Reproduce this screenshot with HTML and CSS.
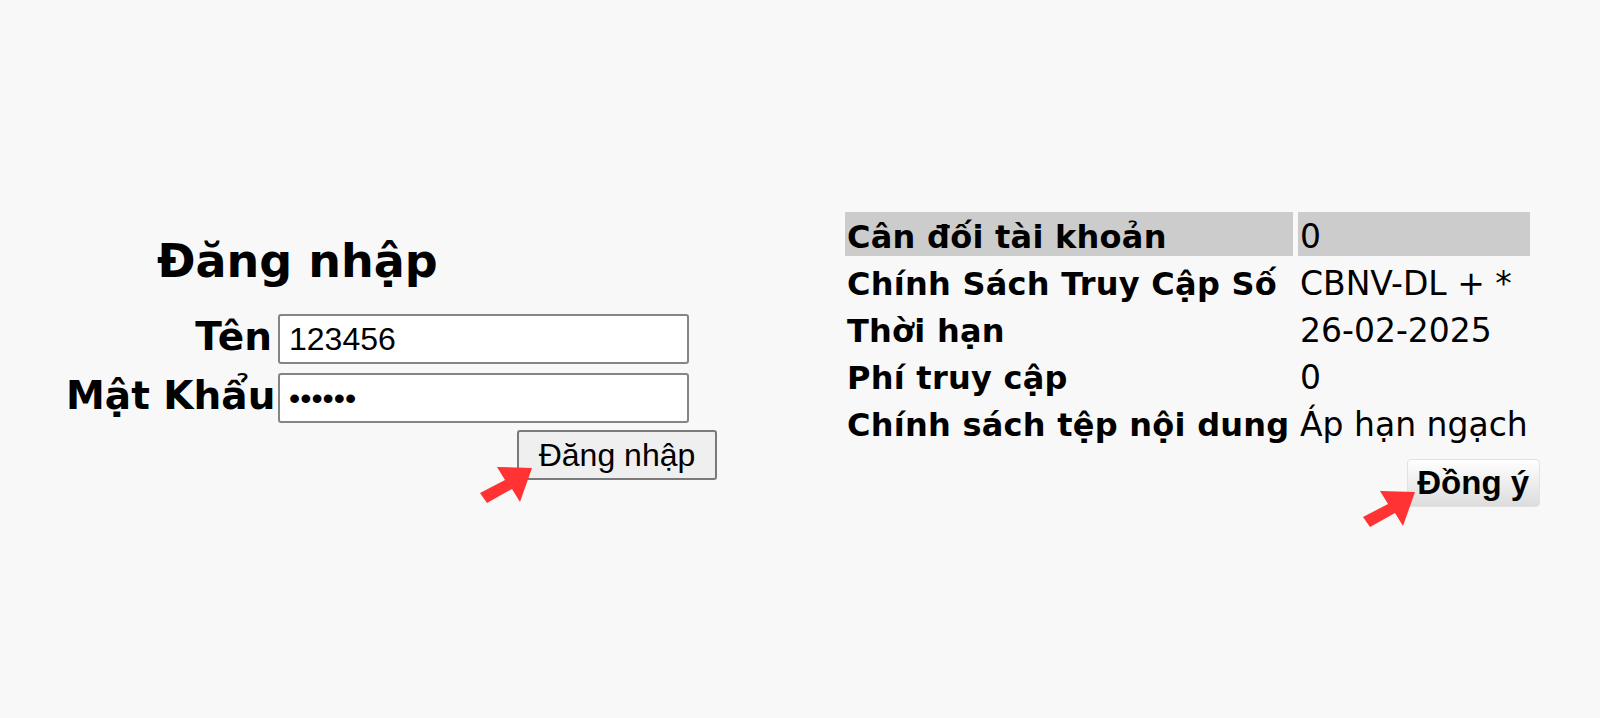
FILE: index.html
```html
<!DOCTYPE html>
<html lang="vi">
<head>
    <meta charset="UTF-8">
    <meta name="viewport" content="width=device-width, initial-scale=1.0">
    <link rel="stylesheet" href="styles.css">
    <title>Đăng nhập</title>
</head>
<body>
    <div class="page">
        <form class="login" action="" method="POST">
            <h2 class="login-title">Đăng nhập</h2>
            <div class="login-grid">
                <label for="user" class="field-label">Tên</label>
                <input type="text" id="user" class="field-input" value="123456">

                <label for="pass" class="field-label">Mật Khẩu</label>
                <input type="password" id="pass" class="field-input" value="123456">

                <div class="login-actions">
                    <button type="button" class="btn-login">Đăng nhập</button>
                </div>
            </div>
        </form>

        <div class="summary">
            <table class="info-table">
                <tr class="row-head">
                    <td class="info-label">Cân đối tài khoản</td>
                    <td class="info-value">0</td>
                </tr>
                <tr>
                    <td class="info-label">Chính Sách Truy Cập Số</td>
                    <td class="info-value">CBNV-DL + *</td>
                </tr>
                <tr>
                    <td class="info-label">Thời hạn</td>
                    <td class="info-value">26-02-2025</td>
                </tr>
                <tr>
                    <td class="info-label">Phí truy cập</td>
                    <td class="info-value">0</td>
                </tr>
                <tr>
                    <td class="info-label">Chính sách tệp nội dung</td>
                    <td class="info-value">Áp hạn ngạch</td>
                </tr>
            </table>
            <button type="button" class="btn-ok">Đồng ý</button>
        </div>

        <!-- red pointers -->
        <svg class="arrow arrow-login" width="70" height="70" viewBox="0 0 70 70">
            <polygon points="10,53 35,40 27,27 62,28 50,62 42,49 17,63" fill="#ff3333"/>
        </svg>
        <svg class="arrow arrow-ok" width="70" height="70" viewBox="0 0 70 70">
            <polygon points="10,53 35,40 27,27 62,28 50,62 42,49 17,63" fill="#ff3333"/>
        </svg>
    </div>
</body>
</html>
```

FILE: styles.css
```css
* {
    box-sizing: border-box;
}
html, body {
    margin: 0;
    background-color: #f8f8f8;
    font-family: "DejaVu Sans", Verdana, sans-serif;
    color: #000;
}
.page {
    position: relative;
    display: flex;
    align-items: flex-start;
    min-height: 718px;
    padding: 209px 0 0 66px;
}

/* login */
.login {
    width: 623px;
    margin-top: 26px;
}
.login-title {
    margin: 0 0 26px 91px;
    font-size: 46px;
    line-height: 53px;
    font-weight: bold;
}
.login-grid {
    display: grid;
    grid-template-columns: 206px 411px;
    column-gap: 6px;
    row-gap: 9px;
}
.field-label {
    text-align: right;
    font-size: 39px;
    font-weight: bold;
    line-height: 46px;
    white-space: nowrap;
}
.field-input {
    display: block;
    width: 411px;
    height: 50px;
    margin: 0;
    padding: 0 9px;
    font-family: "Liberation Sans", Arial, sans-serif;
    font-size: 32px;
    color: #000;
    background: #fff;
    border: 2px solid #858585;
    border-radius: 3px;
    outline: none;
}
.login-actions {
    grid-column: 2;
    margin-top: -2px;
}
.btn-login {
    display: block;
    width: 200px;
    height: 50px;
    margin-left: 239px;
    padding: 0;
    font-family: "Liberation Sans", Arial, sans-serif;
    font-size: 32px;
    color: #000;
    background: #efefef;
    border: 2px solid #7a7a7a;
    border-radius: 3px;
}

/* info table */
.summary {
    display: flex;
    flex-direction: column;
    align-items: flex-end;
    margin-left: 151px;
}
.info-table {
    border-spacing: 5px 3px;
    font-size: 32px;
    line-height: 36px;
}
.info-table td {
    height: 44px;
    padding: 7px 2px 0;
    vertical-align: baseline;
    white-space: nowrap;
}
.info-label {
    width: 448px;
    font-weight: bold;
    letter-spacing: 0.25px;
}
.info-value {
    width: 226px;
    font-size: 33px;
}
.row-head td {
    background-color: #cccccc;
}
.btn-ok {
    width: 133px;
    height: 48px;
    margin: 12px -5px 0 0;
    padding: 0;
    font-family: "Liberation Sans", Arial, sans-serif;
    font-size: 33px;
    font-weight: bold;
    color: #000;
    background: linear-gradient(#ffffff, #dcdcdc);
    border: 1px solid #e2e2e2;
    border-radius: 4px;
}

.arrow {
    position: absolute;
}
.arrow-login {
    left: 470px;
    top: 440px;
}
.arrow-ok {
    left: 1353px;
    top: 464px;
}
```
